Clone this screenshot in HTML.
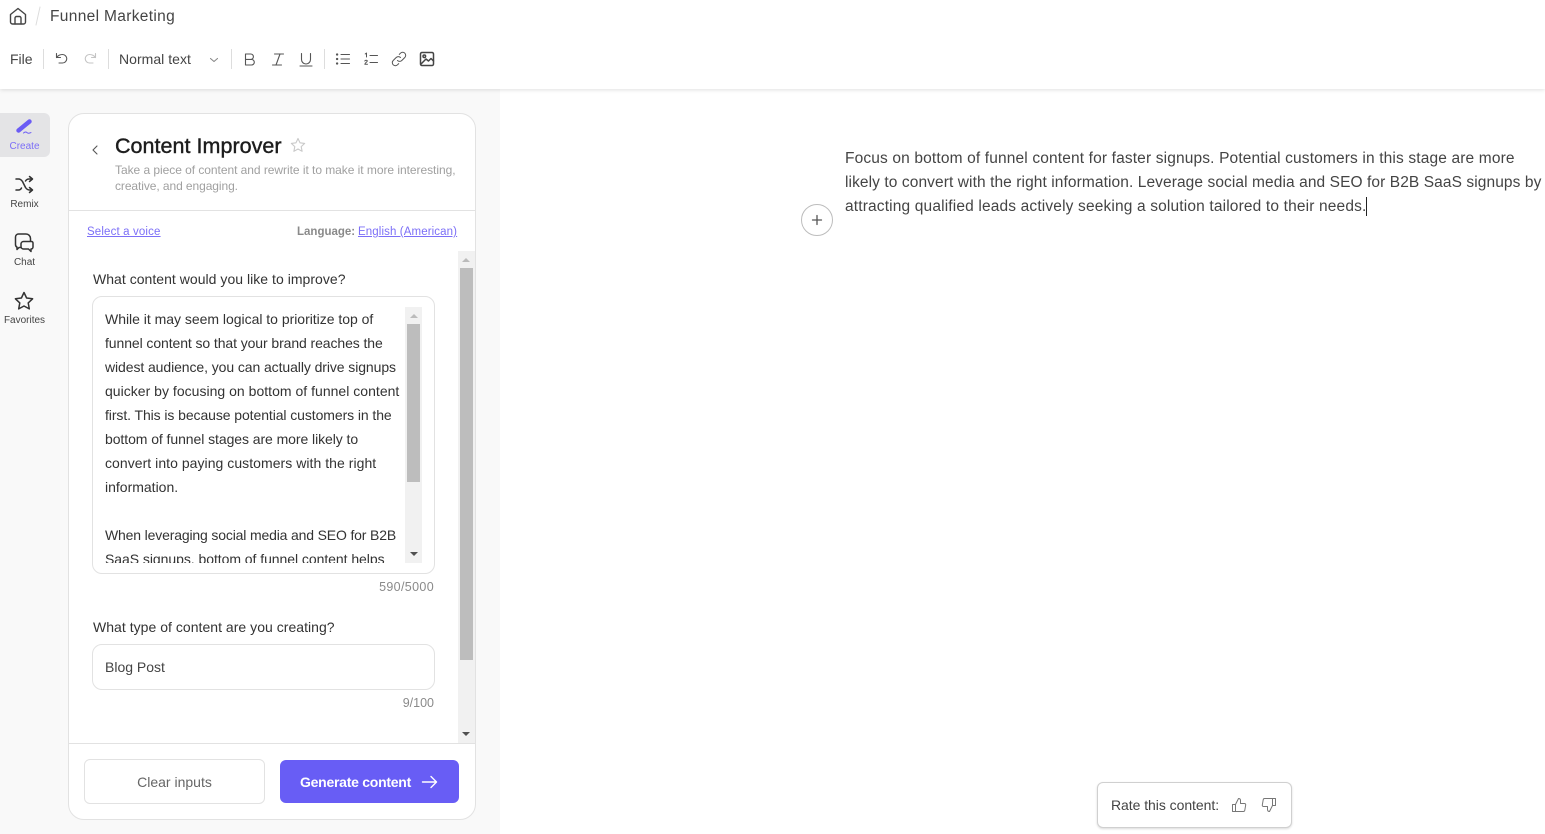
<!DOCTYPE html>
<html><head><meta charset="utf-8"><style>
html,body{margin:0;padding:0;width:1545px;height:834px;overflow:hidden;background:#fff;font-family:"Liberation Sans",sans-serif;color:#333}
.a{position:absolute}
.t{position:absolute;white-space:nowrap}
svg{position:absolute;fill:none;stroke:#555;stroke-width:1.1;stroke-linecap:round;stroke-linejoin:round}
.b{font-size:14px;line-height:24px;color:#333}
.sep{position:absolute;width:1px;height:20px;top:49px;background:#ddd}
.up{width:0;height:0;border-left:4px solid transparent;border-right:4px solid transparent;border-bottom:4px solid #bbb;position:absolute}
.dn{width:0;height:0;border-left:4px solid transparent;border-right:4px solid transparent;border-top:4px solid #505050;position:absolute}
</style></head><body>
<div class="a" style="left:0;top:89px;width:500px;height:745px;background:#f9f9f9"></div>
<div class="a" style="left:0;top:0;width:1545px;height:89px;background:#fff;box-shadow:0 1px 4px rgba(0,0,0,.12)"></div>

<svg style="left:8px;top:6px;stroke:#444;stroke-width:1.400" width="20" height="20" viewBox="0 0 20 20"><path d="M2.500 8.500 10 2.500l7.500 6V16a2 2 0 0 1-2 2h-11a2 2 0 0 1-2-2z"/><path d="M7 18v-6a1.500 1.500 0 0 1 1.500-1.500h3A1.500 1.500 0 0 1 13 12v6"/></svg>
<svg style="left:35px;top:6px;stroke:#ddd;stroke-width:1" width="6" height="20"><path d="M5 1 1 19"/></svg>
<div class="t" style="left:50px;top:8px;font-size:15.500px;line-height:18px;letter-spacing:.33px;color:#444">Funnel Marketing</div>

<div class="t" style="left:10px;top:51px;font-size:14px;line-height:17px;color:#444">File</div>
<div class="sep" style="left:43px"></div>
<svg style="left:54px;top:51px" width="16" height="16" viewBox="0 0 16 16"><path d="M2.500 2.500v4h4"/><path d="M2.500 6.500C4 4.500 6 3.500 8.500 3.500a4.200 4.200 0 0 1 0 8.500H5"/></svg>
<svg style="left:82px;top:51px;stroke:#c4c4c4" width="16" height="16" viewBox="0 0 16 16"><path d="M13.500 2.500v4h-4"/><path d="M13.500 6.500C12 4.500 10 3.500 7.500 3.500a4.200 4.200 0 0 0 0 8.500H11"/></svg>
<div class="sep" style="left:108px"></div>
<div class="t" style="left:119px;top:51px;font-size:14px;line-height:17px;color:#444;letter-spacing:.03px">Normal text</div>
<svg style="left:208px;top:55px;stroke:#888;stroke-width:1.100" width="12" height="10" viewBox="0 0 12 10"><path d="M2.500 3.500 6 6.500l3.500-3"/></svg>
<div class="sep" style="left:231px"></div>
<svg style="left:242px;top:51px" width="16" height="16" viewBox="0 0 16 16"><path d="M3.500 3h5.200a2.700 2.700 0 0 1 0 5.400H3.500zM3.500 8.400h6a2.800 2.800 0 0 1 0 5.600h-6z"/></svg>
<svg style="left:270px;top:51px" width="16" height="16" viewBox="0 0 16 16"><path d="M4.500 3h9M2.500 14h9M10 3 6 14"/></svg>
<svg style="left:298px;top:51px" width="16" height="16" viewBox="0 0 16 16"><path d="M3.500 2.500v6a4.500 4.500 0 0 0 9 0v-6M2 15h12"/></svg>
<div class="sep" style="left:324px"></div>
<svg style="left:335px;top:51px" width="16" height="16" viewBox="0 0 16 16"><path d="M6 3.500h8.500M6 8h8.500M6 12.500h8.500"/><path stroke-width="2.200" d="M2 3.500h.2M2 8h.2M2 12.500h.2"/></svg>
<svg style="left:363px;top:51px" width="16" height="16" viewBox="0 0 16 16"><path d="M7 4.500h7.500M7 11.500h7.500"/><path stroke-width="1" d="M2.200 3 3.500 2v4M1.800 10c.3-1 2.500-1 2.500 0 0 1-2.500 2-2.500 3.300h2.700"/></svg>
<svg style="left:391px;top:51px;stroke-width:1" width="16" height="16" viewBox="0 0 16 16"><path d="M6.500 9.500a3 3 0 0 0 4.300 0l3-3a3 3 0 0 0-4.300-4.300L8.300 3.400"/><path d="M9.500 6.500a3 3 0 0 0-4.300 0l-3 3a3 3 0 0 0 4.300 4.300l1.200-1.200"/></svg>
<svg style="left:419px;top:51px;stroke-width:1.500;stroke:#444" width="16" height="16" viewBox="0 0 16 16"><rect x="1.500" y="1.500" width="13" height="13" rx="1.500"/><circle cx="5.300" cy="5.300" r="1.300"/><path d="M2 13l5-5 2.500 2L12 7.500l2.500 2.500"/></svg>

<!-- sidebar -->
<div class="a" style="left:0;top:113px;width:50px;height:44px;background:#e4e4e6;border-radius:0 6px 6px 0"></div>
<svg style="left:14px;top:116px;stroke:#6b5cf5" width="20" height="20" viewBox="0 0 20 20"><path stroke-width="4.400" d="M4.500 14.500 15.500 5.500"/><path stroke-width="1" d="M9.500 17c1.500-1.300 2.500-1.300 3.500-.4s2 .9 4 0"/></svg>
<div class="t" style="left:0;width:49px;text-align:center;top:141px;font-size:10px;line-height:12px;color:#7c6ff7">Create</div>

<svg style="left:13px;top:175px;stroke:#333;stroke-width:1.500" width="22" height="20" viewBox="0 0 22 20"><path d="M3 4h2.500c2 0 3 1 4 2.500l3 6c1 1.500 2 2.500 4 2.500H19"/><path d="M3 15h2.500c1.500 0 2.500-1 3-2M12.500 6c.8-1.300 2-2 3.500-2h3"/><path d="M16.500 1.500 19.500 4l-3 2.500M16.500 12.500l3 2.500-3 2.500"/></svg>
<div class="t" style="left:0;width:49px;text-align:center;top:199px;font-size:10px;line-height:12px;color:#444">Remix</div>

<svg style="left:13px;top:232px;stroke:#333;stroke-width:1.500" width="22" height="22" viewBox="0 0 22 22"><path d="M8 15.500H6L4 17.500V15.200A3 3 0 0 1 2.500 12.500V5a3 3 0 0 1 3-3h7.500a4.500 4.500 0 0 1 4.500 4.500V9"/><path d="M10.500 9.500h8a1.500 1.500 0 0 1 1.500 1.500v4a2 2 0 0 1-2 2v2.500L15.500 17h-5A2.500 2.500 0 0 1 8 14.500V12a2.500 2.500 0 0 1 2.500-2.500z"/></svg>
<div class="t" style="left:0;width:49px;text-align:center;top:257px;font-size:10px;line-height:12px;color:#444">Chat</div>

<svg style="left:14px;top:291px;stroke:#333;stroke-width:1.500" width="20" height="20" viewBox="0 0 20 20"><path d="M10 1.500l2.600 5.500 6 .8-4.400 4.100 1.100 6L10 15l-5.300 2.900 1.100-6L1.400 7.800l6-.8z"/></svg>
<div class="t" style="left:0;width:49px;text-align:center;top:315px;font-size:10px;line-height:12px;color:#444">Favorites</div>

<!-- panel -->
<div class="a" style="left:68px;top:113px;width:406px;height:705px;background:#fff;border:1px solid #e2e2e2;border-radius:16px"></div>
<svg style="left:90px;top:144px;stroke:#555;stroke-width:1.100" width="10" height="12" viewBox="0 0 10 12"><path d="M7 2 3 6l4 4"/></svg>
<div class="t" style="left:115px;top:133px;font-size:21.500px;line-height:26px;color:#1c1c1c;-webkit-text-stroke:.4px #1c1c1c;letter-spacing:.03px">Content Improver</div>
<svg style="left:290px;top:137px;stroke:#c9c9c9;stroke-width:1.100" width="16" height="16" viewBox="0 0 16 16"><path d="M8 1.500l2 4.300 4.700.6-3.500 3.200.9 4.700L8 12l-4.100 2.300.9-4.700L1.300 6.400 6 5.800z"/></svg>
<div class="t" style="left:115px;top:163px;font-size:12px;line-height:15px;color:#a0a0a0;letter-spacing:-.045px">Take a piece of content and rewrite it to make it more interesting,</div>
<div class="t" style="left:115px;top:179px;font-size:12px;line-height:15px;color:#a0a0a0;letter-spacing:-.08px">creative, and engaging.</div>
<div class="a" style="left:69px;top:210px;width:406px;height:1px;background:#e2e2e2"></div>

<div class="t" style="left:87px;top:225px;font-size:11.500px;line-height:14px;color:#7c6ff7;text-decoration:underline;letter-spacing:.14px">Select a voice</div>
<div class="t" style="left:297px;top:225px;font-size:11.500px;line-height:14px;color:#8a8a8a;font-weight:bold">Language:</div>
<div class="t" style="left:358px;top:225px;font-size:11.500px;line-height:14px;color:#7c6ff7;text-decoration:underline;letter-spacing:.11px">English (American)</div>

<!-- outer scrollbar -->
<div class="a" style="left:458px;top:251px;width:17px;height:492px;background:#f1f1f1"></div>
<div class="up" style="left:462px;top:258px"></div>
<div class="a" style="left:460px;top:268px;width:13px;height:392px;background:#bdbdbd"></div>
<div class="dn" style="left:462px;top:732px"></div>

<div class="t" style="left:93px;top:271px;font-size:14px;line-height:16px;color:#333;letter-spacing:.03px">What content would you like to improve?</div>

<!-- textarea -->
<div class="a" style="left:92px;top:296px;width:341px;height:276px;border:1px solid #e2e2e2;border-radius:10px;background:#fff"></div>
<div class="a" style="left:93px;top:307px;width:310px;height:256px;overflow:hidden">
<div class="t b" style="left:12px;top:0;letter-spacing:-.02px">While it may seem logical to prioritize top of</div>
<div class="t b" style="left:12px;top:24px;letter-spacing:-.09px">funnel content so that your brand reaches the</div>
<div class="t b" style="left:12px;top:48px;letter-spacing:-.085px">widest audience, you can actually drive signups</div>
<div class="t b" style="left:12px;top:72px;letter-spacing:.02px">quicker by focusing on bottom of funnel content</div>
<div class="t b" style="left:12px;top:96px;letter-spacing:-.085px">first. This is because potential customers in the</div>
<div class="t b" style="left:12px;top:120px;letter-spacing:-.07px">bottom of funnel stages are more likely to</div>
<div class="t b" style="left:12px;top:144px;letter-spacing:.045px">convert into paying customers with the right</div>
<div class="t b" style="left:12px;top:168px">information.</div>
<div class="t b" style="left:12px;top:216px;letter-spacing:-.16px">When leveraging social media and SEO for B2B</div>
<div class="t b" style="left:12px;top:240px;letter-spacing:-.05px">SaaS signups, bottom of funnel content helps</div>
</div>
<div class="a" style="left:405px;top:307px;width:17px;height:256px;background:#f1f1f1"></div>
<div class="up" style="left:410px;top:314px"></div>
<div class="a" style="left:407px;top:324px;width:13px;height:158px;background:#bdbdbd"></div>
<div class="dn" style="left:410px;top:552px"></div>
<div class="t" style="right:1111px;top:580px;font-size:12.500px;line-height:15px;color:#8a8a8a;letter-spacing:.35px">590/5000</div>

<div class="t" style="left:93px;top:619px;font-size:14px;line-height:16px;color:#333;letter-spacing:.03px">What type of content are you creating?</div>
<div class="a" style="left:92px;top:644px;width:341px;height:44px;border:1px solid #e2e2e2;border-radius:10px;background:#fff"></div>
<div class="t" style="left:105px;top:659px;font-size:14px;line-height:17px;color:#444">Blog Post</div>
<div class="t" style="right:1111px;top:696px;font-size:12.500px;line-height:15px;color:#8a8a8a">9/100</div>

<div class="a" style="left:69px;top:743px;width:406px;height:1px;background:#e2e2e2"></div>
<div class="a" style="left:84px;top:759px;width:179px;height:43px;border:1px solid #e2e2e2;border-radius:6px;background:#fff;text-align:center;line-height:44px;font-size:14px;color:#666">Clear inputs</div>
<div class="a" style="left:280px;top:760px;width:179px;height:43px;border-radius:6px;background:#685df5"></div>
<div class="t" style="left:300px;top:774px;font-size:14px;line-height:17px;color:#fff;font-weight:bold;letter-spacing:-.26px">Generate content</div>
<svg style="left:421px;top:775px;stroke:#fff;stroke-width:1.400" width="17" height="14" viewBox="0 0 17 14"><path d="M1.500 7h14M10 1.500 15.500 7 10 12.500"/></svg>

<!-- editor -->
<div class="t" style="left:845px;top:147px;font-size:15.500px;line-height:24px;color:#444;letter-spacing:.146px">Focus on bottom of funnel content for faster signups. Potential customers in this stage are more</div>
<div class="t" style="left:845px;top:171px;font-size:15.500px;line-height:24px;color:#444;letter-spacing:.09px">likely to convert with the right information. Leverage social media and SEO for B2B SaaS signups by</div>
<div class="t" style="left:845px;top:195px;font-size:15.500px;line-height:24px;color:#444;letter-spacing:.155px">attracting qualified leads actively seeking a solution tailored to their needs.</div>
<div class="a" style="left:1366px;top:197px;width:1px;height:19px;background:#222"></div>
<div class="a" style="left:801px;top:204px;width:30px;height:30px;border:1px solid #bdbdbd;border-radius:50%;background:#fff"></div>
<svg style="left:811px;top:214px;stroke:#555;stroke-width:1.300" width="12" height="12" viewBox="0 0 12 12"><path d="M6 1.500v9M1.500 6h9"/></svg>

<!-- rating -->
<div class="a" style="left:1097px;top:782px;width:193px;height:44px;border:1px solid #d0d0d0;border-radius:6px;background:#fff;box-shadow:0 1px 2px rgba(0,0,0,.15)"></div>
<div class="t" style="left:1111px;top:797px;font-size:14px;line-height:17px;color:#444;letter-spacing:-.05px">Rate this content:</div>
<svg style="left:1231px;top:797px;stroke:#777;stroke-width:1" width="16" height="16" viewBox="0 0 16 16"><path d="M1.500 7.500h3v7h-3zM4.500 7.500 7.500 1.500c1.200 0 2 .8 2 2v3h4c.8 0 1.300.7 1.200 1.400l-.9 5.300c-.1.700-.7 1.300-1.400 1.300H4.500"/></svg>
<svg style="left:1261px;top:797px;stroke:#777;stroke-width:1" width="16" height="16" viewBox="0 0 16 16"><path d="M14.500 8.500h-3v-7h3zM11.500 8.500l-3 6c-1.200 0-2-.8-2-2v-3h-4c-.8 0-1.300-.7-1.200-1.400l.9-5.300c.1-.7.700-1.300 1.400-1.300h9.400"/></svg>
</body></html>
